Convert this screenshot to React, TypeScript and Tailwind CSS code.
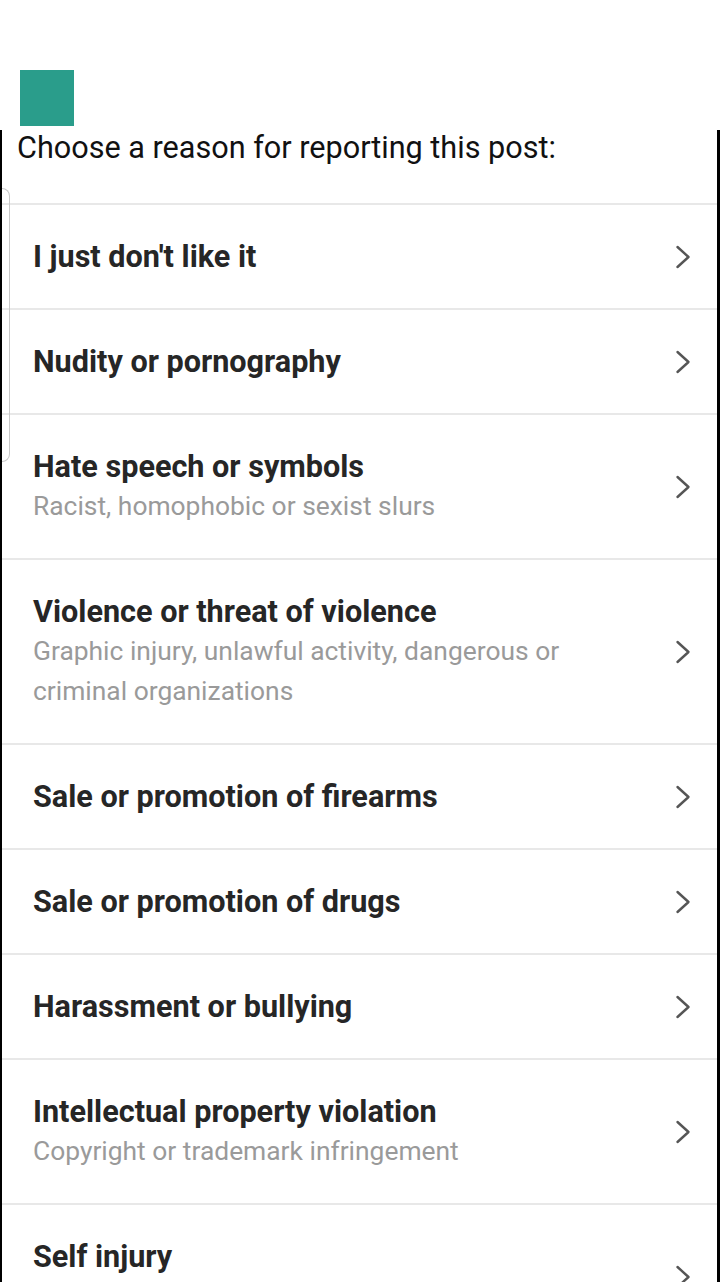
import React from "react";

interface Reason {
	title: string;
	sub?: string;
}

const reasons: Reason[] = [
	{ title: "I just don't like it" },
	{ title: "Nudity or pornography" },
	{ title: "Hate speech or symbols", sub: "Racist, homophobic or sexist slurs" },
	{
		title: "Violence or threat of violence",
		sub: "Graphic injury, unlawful activity, dangerous or criminal organizations",
	},
	{ title: "Sale or promotion of firearms" },
	{ title: "Sale or promotion of drugs" },
	{ title: "Harassment or bullying" },
	{ title: "Intellectual property violation", sub: "Copyright or trademark infringement" },
	{ title: "Self injury", sub: "Suicide, self-harm or eating disorders" },
];

const Chevron = () => (
	<svg width="16" height="26" viewBox="0 0 16 26" fill="none" className="shrink-0">
		<polyline
			points="2.5,3 13.5,13 2.5,23"
			stroke="#555"
			strokeWidth="2.4"
			strokeLinecap="round"
			strokeLinejoin="round"
		/>
	</svg>
);

export default function App() {
	return (
		<div className="h-[1282px] overflow-hidden bg-white font-['Roboto',sans-serif]">
			<div className="h-[70px]" />
			<div className="ml-5 h-[56px] w-[54px] bg-[#2a9d8b]" />
			<div className="relative mt-1 border-l-2 border-r-[3px] border-black">
				<div className="h-[73px] pl-[15px] text-[30.6px] leading-[36px] text-[#111]">
					Choose a reason for reporting this post:
				</div>
				<div className="pointer-events-none absolute left-0 top-[58px] h-[274px] w-[8px] rounded-r-[8px] border border-l-0 border-[#c8c8c8]" />
				<ul>
					{reasons.map((r) => (
						<li
							key={r.title}
							className="flex items-center justify-between border-t-2 border-[#e8e8e8] py-[32.5px] pl-[31px] pr-[26px]"
						>
							<div className="flex flex-col pr-8">
								<span className="text-[30.6px] font-bold leading-[38px] text-[#262626]">{r.title}</span>
								{r.sub && (
									<span className="text-[26.4px] leading-[40px] text-[#9a9a9a]">{r.sub}</span>
								)}
							</div>
							<Chevron />
						</li>
					))}
				</ul>
			</div>
		</div>
	);
}
